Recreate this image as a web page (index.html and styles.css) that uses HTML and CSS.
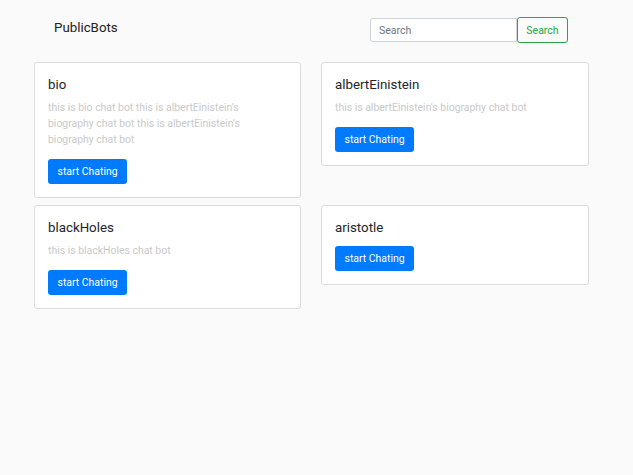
FILE: index.html
```html
<!DOCTYPE html>
<html>
<head>
<meta charset="utf-8">
<link rel="stylesheet" href="styles.css">
</head>
<body>
<header class="topbar">
  <div class="brand">PublicBots</div>
  <form class="search">
    <input class="search-input" type="text" placeholder="Search">
    <button class="search-btn" type="button">Search</button>
  </form>
</header>
<main class="bots">
  <div class="card">
    <h5 class="card-title">bio</h5>
    <p class="card-text">this is bio chat bot this is albertEinistein's biography chat bot this is albertEinistein's biography chat bot</p>
    <button class="btn-start" type="button">start Chating</button>
  </div>
  <div class="card card-wide">
    <h5 class="card-title">albertEinistein</h5>
    <p class="card-text">this is albertEinistein's biography chat bot</p>
    <button class="btn-start" type="button">start Chating</button>
  </div>
  <div class="card">
    <h5 class="card-title">blackHoles</h5>
    <p class="card-text">this is blackHoles chat bot</p>
    <button class="btn-start" type="button">start Chating</button>
  </div>
  <div class="card card-wide">
    <h5 class="card-title card-title-only">aristotle</h5>
    <button class="btn-start" type="button">start Chating</button>
  </div>
</main>
</body>
</html>
```

FILE: styles.css
```css
* { box-sizing: border-box; }
html, body {
  margin: 0;
  padding: 0;
  background: #fafafa;
  font-family: Roboto, "Liberation Sans", sans-serif;
  color: #212529;
}
.topbar {
  display: flex;
  justify-content: space-between;
  align-items: flex-start;
  padding: 17px 65px 0 54px;
  height: 43px;
}
.brand {
  font-size: 13.3px;
  line-height: 17px;
  padding-top: 2px;
  color: #222;
}
.search {
  display: flex;
  align-items: center;
  margin: 0;
}
.search-input {
  width: 147px;
  height: 24px;
  border: 1px solid #ced4da;
  border-radius: 3px 0 0 3px;
  padding: 0 8px;
  font-family: Roboto, "Liberation Sans", sans-serif;
  font-size: 10.5px;
  color: #495057;
  background: #fff;
  outline: none;
}
.search-input::placeholder { color: #6c757d; }
.search-btn {
  width: 51px;
  height: 26px;
  border: 1px solid #28a745;
  border-radius: 3px;
  background: transparent;
  color: #28a745;
  font-family: Roboto, "Liberation Sans", sans-serif;
  font-size: 10.5px;
  padding: 0;
}
.bots {
  display: grid;
  grid-template-columns: 267px 268px;
  column-gap: 20px;
  row-gap: 7px;
  align-items: start;
  padding-left: 34px;
  margin-top: 19px;
}
.card {
  background: #fff;
  border: 1px solid #dcdcdc;
  border-radius: 3px;
  padding: 13px;
}
.card-title {
  margin: 0 0 7px 0;
  font-size: 13.3px;
  font-weight: 400;
  line-height: 17px;
  color: #212529;
}
.card-title-only { margin-bottom: 10px; }
.card-text {
  margin: 0 0 11px 0;
  max-width: 208px;
  font-size: 10.45px;
  line-height: 16px;
  color: #c9c9c9;
}
.btn-start {
  display: block;
  height: 25px;
  padding: 0 9.5px;
  border: none;
  border-radius: 3px;
  background: #007bff;
  color: #fff;
  font-family: Roboto, "Liberation Sans", sans-serif;
  font-size: 10.45px;
  line-height: 25px;
}
```
